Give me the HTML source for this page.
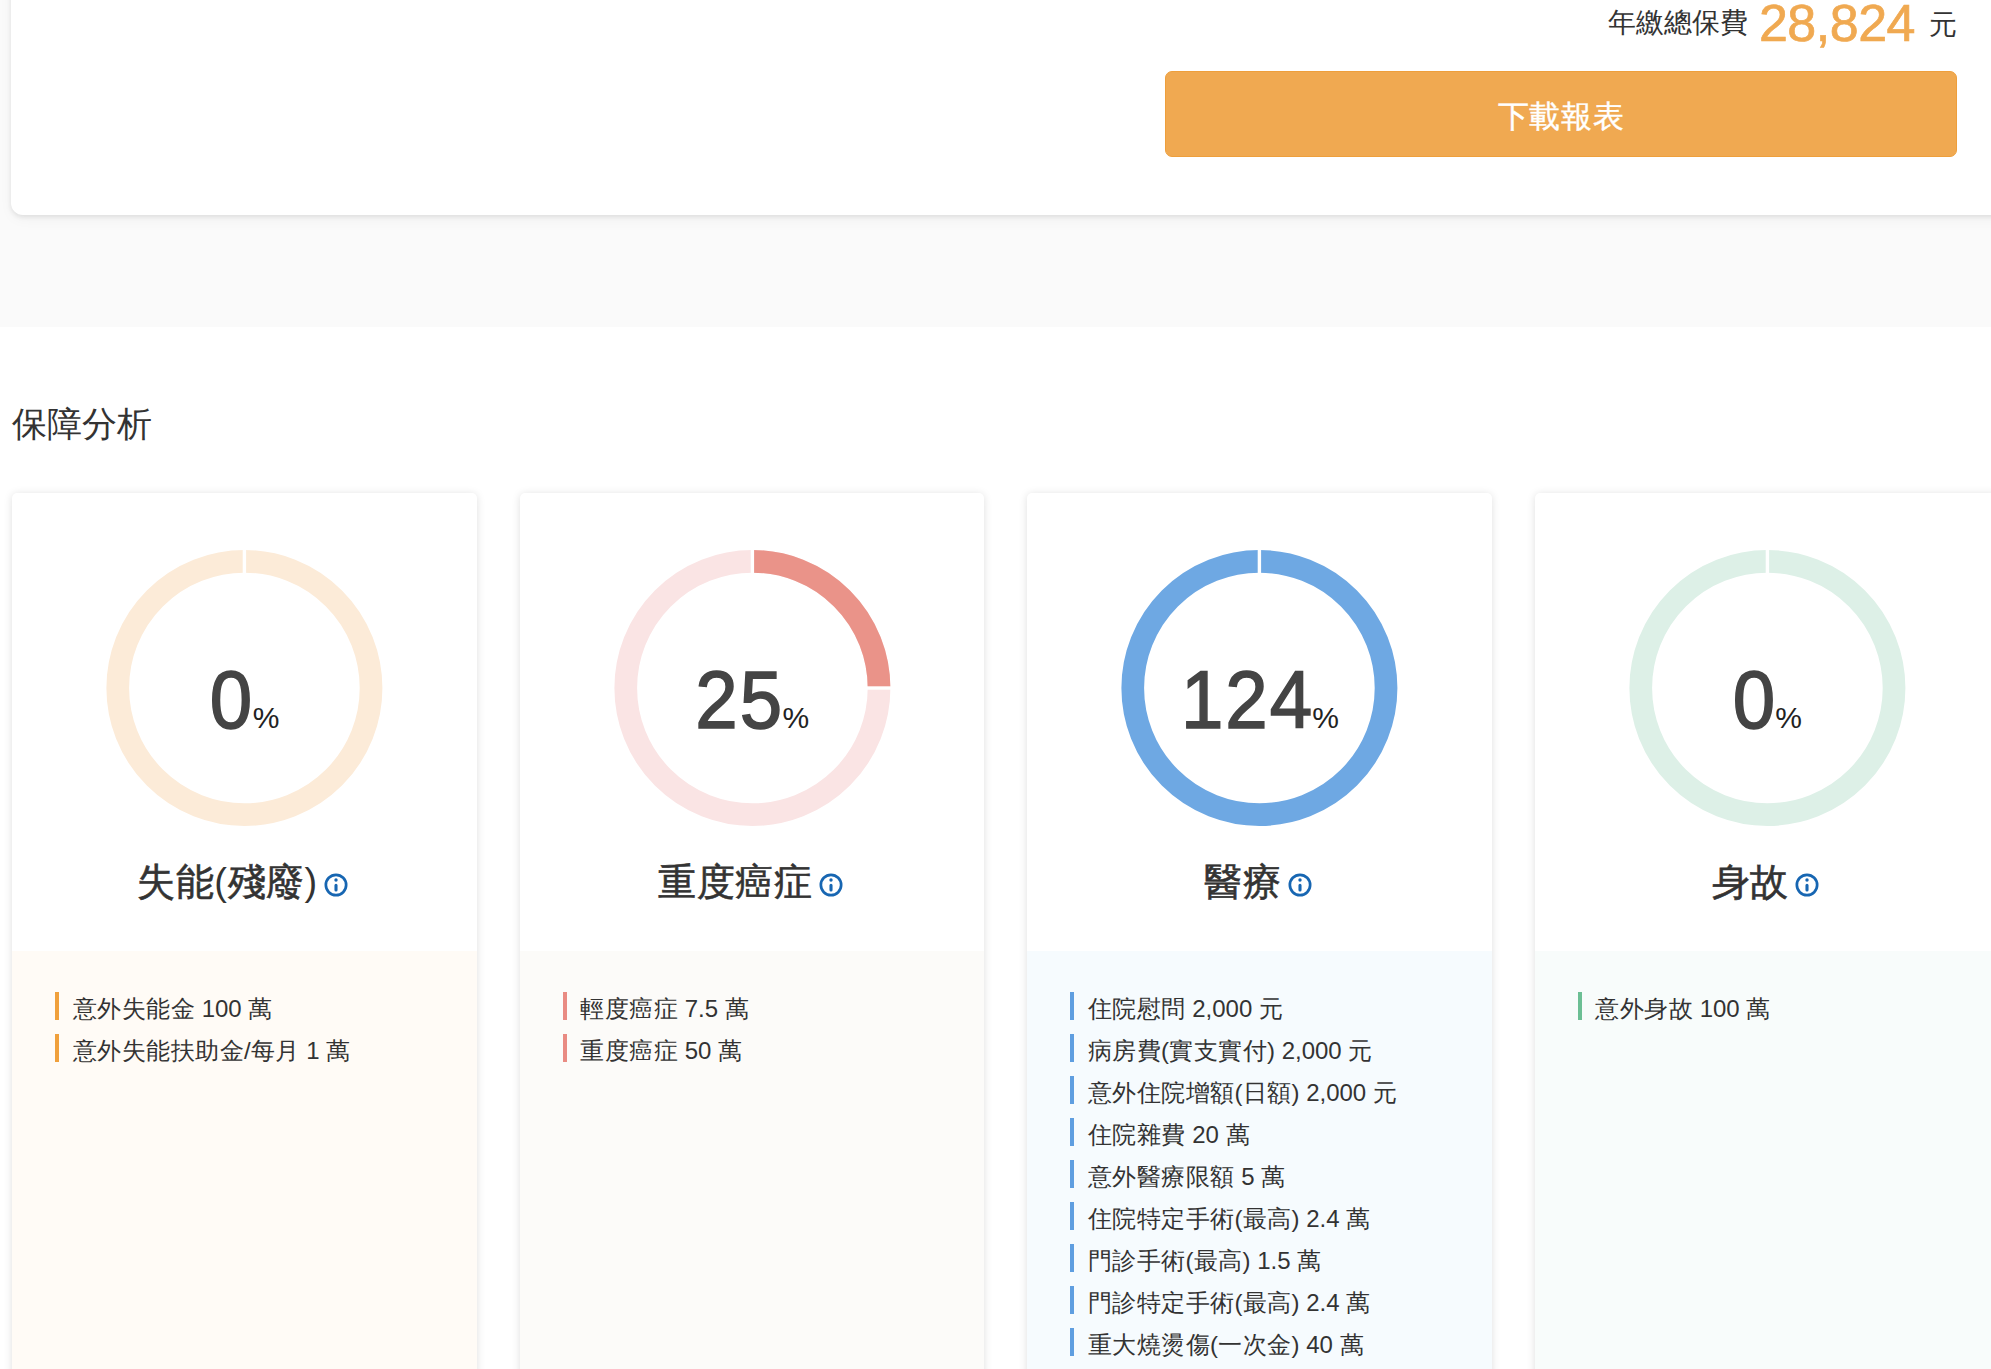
<!DOCTYPE html>
<html lang="zh-Hant">
<head>
<meta charset="utf-8">
<style>
html,body{margin:0;padding:0;}
body{width:1991px;height:1369px;overflow:hidden;position:relative;background:#fff;font-family:"Liberation Sans",sans-serif;color:#333;}
.graybg{position:absolute;left:0;top:0;width:1991px;height:327px;background:#fafafa;}
.topcard{position:absolute;left:11px;top:-300px;width:2100px;height:514.5px;background:#fff;border-radius:12px;box-shadow:0 2px 5px rgba(0,0,0,0.09),0 4px 14px rgba(0,0,0,0.04);}
.total{position:absolute;right:34px;top:-4px;white-space:nowrap;}
.total .lbl{font-size:28px;color:#333;position:relative;top:-12px;}
.total .num{font-size:52px;color:#f0a951;margin:0 14px 0 11px;letter-spacing:-0.5px;-webkit-text-stroke:0.7px #f0a951;position:relative;top:-3px;}
.total .yuan{font-size:28px;color:#333;position:relative;top:-10px;}
.btn{position:absolute;left:1165px;top:71px;width:790px;height:84px;background:#f0a951;border:1px solid #ee9f3c;border-radius:7px;color:#fff;font-size:31px;letter-spacing:0.7px;text-align:center;line-height:89px;-webkit-text-stroke:0.4px #fff;}
.heading{position:absolute;left:11.5px;top:398.5px;font-size:35px;color:#333;line-height:50px;}
.card{position:absolute;top:492.5px;width:464.5px;height:1000px;background:#fff;border-radius:5px;box-shadow:0 1px 8px rgba(0,0,0,0.13);overflow:hidden;}
.card .lower{position:absolute;left:0;top:458px;width:100%;height:600px;}
.card svg.donut{position:absolute;left:0;top:0;}
.card .title{position:absolute;left:-1.5px;top:361.5px;width:100%;text-align:center;font-size:38px;letter-spacing:0.5px;-webkit-text-stroke:0.6px #333;line-height:56px;color:#333;white-space:nowrap;}
.title .pp{-webkit-text-stroke:0;}
.card svg.info{display:inline-block;vertical-align:middle;margin-left:6.5px;position:relative;top:0.5px;}
.big{position:absolute;left:0.5px;top:160px;width:100%;text-align:center;white-space:nowrap;color:#444;}
.big .n{display:inline-block;font-size:82px;letter-spacing:2.1px;transform:scaleX(0.93);-webkit-text-stroke:1.6px #444;}
.big .p{font-size:30px;color:#222;}
ul{list-style:none;margin:0;padding:0;position:absolute;left:43px;top:37.5px;}
li .l{letter-spacing:0;}
li{position:relative;font-size:24px;letter-spacing:0.5px;line-height:42px;padding-left:17.5px;color:#333;white-space:nowrap;}
li:before{content:"";position:absolute;left:0;top:4px;width:4px;height:28px;}
.c1 li:before{background:#f0a03c;}
.c2 li:before{background:#e98b83;}
.c3 li:before{background:#5f9ee0;}
.c4 li:before{background:#6cbf94;}
</style>
</head>
<body>
<div class="graybg"></div>
<div class="topcard"></div>
<div class="total"><span class="lbl">年繳總保費</span><span class="num">28,824</span><span class="yuan">元</span></div>
<div class="btn">下載報表</div>
<div class="heading">保障分析</div>

<!--CARDS-->
<div class="card c1" style="left:12px">
<svg class="donut" width="465" height="400" viewBox="0 0 465 400"><circle cx="232.4" cy="195.0" r="126.65" fill="none" stroke="#fcebd8" stroke-width="22.7"/><line x1="232.40" y1="81.70" x2="232.40" y2="55.00" stroke="#fff" stroke-width="3.4"/></svg>
<div class="big"><span class="n" style="margin:0 -3.17px 0 -1.67px">0</span><span class="p">%</span></div>
<div class="title">失能<span class="pp">(</span>殘廢<span class="pp">)</span><svg class="info" width="24" height="24" viewBox="0 0 24 24"><circle cx="12" cy="12" r="10.15" fill="none" stroke="#1766b2" stroke-width="2.7"/><circle cx="12" cy="7" r="1.7" fill="#1766b2"/><line x1="12" y1="12.4" x2="12" y2="16.9" stroke="#1766b2" stroke-width="3.1" stroke-linecap="round"/></svg></div>
<div class="lower" style="background:#fffbf6"><ul><li>意外失能金<span class="l"> 100 </span>萬</li><li>意外失能扶助金<span class="l">/</span>每月<span class="l"> 1 </span>萬</li></ul></div>
</div>
<div class="card c2" style="left:519.5px">
<svg class="donut" width="465" height="400" viewBox="0 0 465 400"><circle cx="232.4" cy="195.0" r="126.65" fill="none" stroke="#fae4e4" stroke-width="22.7"/><path d="M232.4,68.35 A126.65,126.65 0 0 1 359.05,195.00" fill="none" stroke="#ea9389" stroke-width="22.7"/><line x1="232.40" y1="81.70" x2="232.40" y2="55.00" stroke="#fff" stroke-width="3.4"/><line x1="345.70" y1="195.00" x2="372.40" y2="195.00" stroke="#fff" stroke-width="3.4"/></svg>
<div class="big"><span class="n" style="margin:0 -4.84px 0 -3.34px">25</span><span class="p">%</span></div>
<div class="title">重度癌症<svg class="info" width="24" height="24" viewBox="0 0 24 24"><circle cx="12" cy="12" r="10.15" fill="none" stroke="#1766b2" stroke-width="2.7"/><circle cx="12" cy="7" r="1.7" fill="#1766b2"/><line x1="12" y1="12.4" x2="12" y2="16.9" stroke="#1766b2" stroke-width="3.1" stroke-linecap="round"/></svg></div>
<div class="lower" style="background:#fcfbf9"><ul><li>輕度癌症<span class="l"> 7.5 </span>萬</li><li>重度癌症<span class="l"> 50 </span>萬</li></ul></div>
</div>
<div class="card c3" style="left:1027px">
<svg class="donut" width="465" height="400" viewBox="0 0 465 400"><circle cx="232.4" cy="195.0" r="126.65" fill="none" stroke="#6ea8e3" stroke-width="22.7"/><line x1="232.40" y1="81.70" x2="232.40" y2="55.00" stroke="#fff" stroke-width="3.4"/></svg>
<div class="big"><span class="n" style="margin:0 -6.51px 0 -5.01px">124</span><span class="p">%</span></div>
<div class="title">醫療<svg class="info" width="24" height="24" viewBox="0 0 24 24"><circle cx="12" cy="12" r="10.15" fill="none" stroke="#1766b2" stroke-width="2.7"/><circle cx="12" cy="7" r="1.7" fill="#1766b2"/><line x1="12" y1="12.4" x2="12" y2="16.9" stroke="#1766b2" stroke-width="3.1" stroke-linecap="round"/></svg></div>
<div class="lower" style="background:#f6fbfe"><ul><li>住院慰問<span class="l"> 2,000 </span>元</li><li>病房費<span class="l">(</span>實支實付<span class="l">) 2,000 </span>元</li><li>意外住院增額<span class="l">(</span>日額<span class="l">) 2,000 </span>元</li><li>住院雜費<span class="l"> 20 </span>萬</li><li>意外醫療限額<span class="l"> 5 </span>萬</li><li>住院特定手術<span class="l">(</span>最高<span class="l">) 2.4 </span>萬</li><li>門診手術<span class="l">(</span>最高<span class="l">) 1.5 </span>萬</li><li>門診特定手術<span class="l">(</span>最高<span class="l">) 2.4 </span>萬</li><li>重大燒燙傷<span class="l">(</span>一次金<span class="l">) 40 </span>萬</li></ul></div>
</div>
<div class="card c4" style="left:1534.5px">
<svg class="donut" width="465" height="400" viewBox="0 0 465 400"><circle cx="232.4" cy="195.0" r="126.65" fill="none" stroke="#ddf0e7" stroke-width="22.7"/><line x1="232.40" y1="81.70" x2="232.40" y2="55.00" stroke="#fff" stroke-width="3.4"/></svg>
<div class="big"><span class="n" style="margin:0 -3.17px 0 -1.67px">0</span><span class="p">%</span></div>
<div class="title">身故<svg class="info" width="24" height="24" viewBox="0 0 24 24"><circle cx="12" cy="12" r="10.15" fill="none" stroke="#1766b2" stroke-width="2.7"/><circle cx="12" cy="7" r="1.7" fill="#1766b2"/><line x1="12" y1="12.4" x2="12" y2="16.9" stroke="#1766b2" stroke-width="3.1" stroke-linecap="round"/></svg></div>
<div class="lower" style="background:#f8fcfb"><ul><li>意外身故<span class="l"> 100 </span>萬</li></ul></div>
</div>
<!--/CARDS-->
</body>
</html>
